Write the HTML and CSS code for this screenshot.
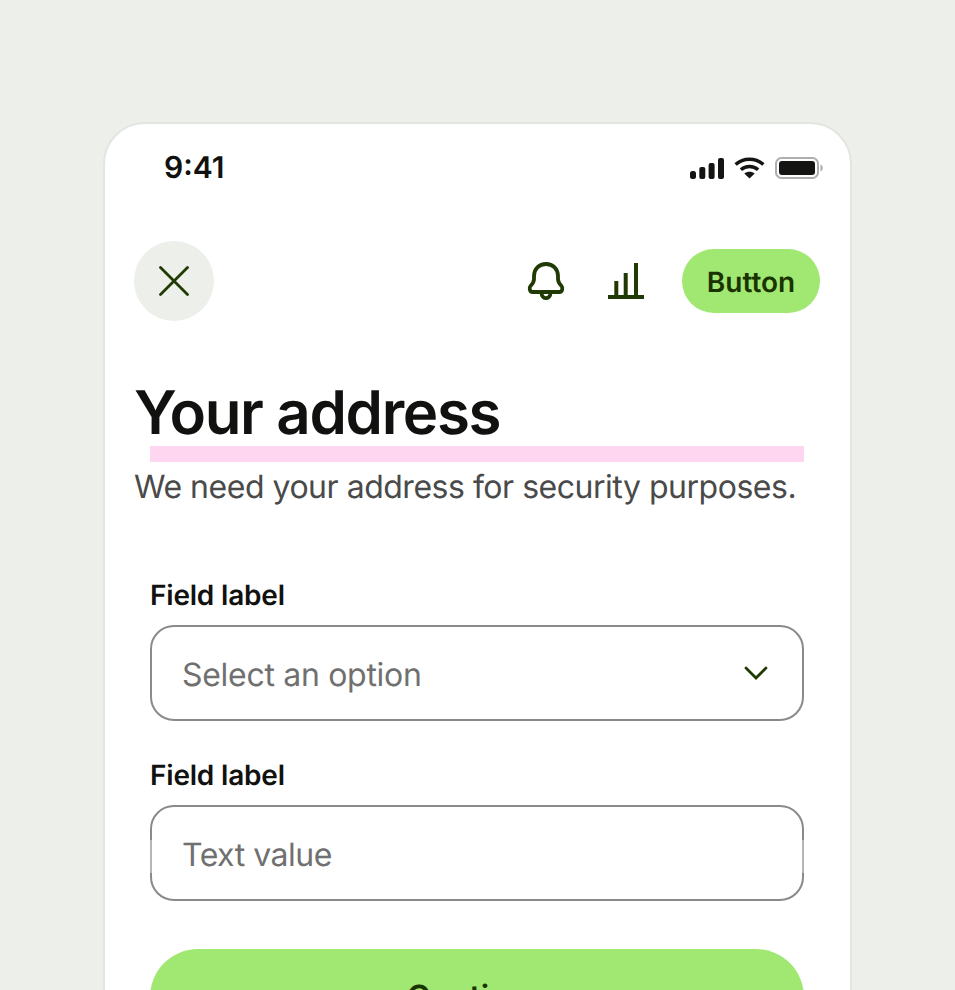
FILE: index.html
```html
<!DOCTYPE html>
<html lang="en">
<head>
    <meta charset="UTF-8">
    <meta name="viewport" content="width=device-width, initial-scale=1.0">
    <title>Your address</title>
    <link rel="stylesheet" href="styles.css">
</head>
<body>
    <div class="phone">
        <div class="status">
            <span class="time">9:41</span>
            <div class="status-icons">
                <svg width="34" height="21" viewBox="0 0 34 21" fill="#141512">
                    <rect x="0" y="13" width="6" height="8" rx="2.5"/>
                    <rect x="9.3" y="9" width="6" height="12" rx="2"/>
                    <rect x="18.6" y="5" width="6" height="16" rx="2"/>
                    <rect x="28" y="0" width="6" height="21" rx="2"/>
                </svg>
                <svg width="31" height="22" viewBox="0 0 31 22" fill="none" stroke="#141512" stroke-width="3.4">
                    <path d="M1.6 7.6C9.4.4 21.600.4 29.400 7.600"/>
                    <path d="M6.900 12.700c4.900-4.300 12.300-4.300 17.200 0"/>
                    <path d="M15.500 21.500l-5.200-5c3-2.500 7.400-2.500 10.400 0z" fill="#141512" stroke="none"/>
                </svg>
                <svg width="48" height="22" viewBox="0 0 48 22">
                    <rect x="1" y="1" width="42" height="20" rx="5.500" fill="none" stroke="#aeaeae" stroke-width="2"/>
                    <rect x="4" y="4" width="36" height="14" rx="3" fill="#141512"/>
                    <path d="M45.500 7.500c1.500.5 2.300 2 2.300 3.500s-.8 3-2.300 3.500z" fill="#aeaeae"/>
                </svg>
            </div>
        </div>

        <div class="toolbar">
            <div class="close">
                <svg width="30" height="30" viewBox="0 0 30 30" fill="none" stroke="#1f3a04" stroke-width="2.800" stroke-linecap="round">
                    <path d="M1.500 1.500l27 27M28.500 1.500l-27 27"/>
                </svg>
            </div>
            <div class="actions">
                <svg class="bell" width="38" height="38" viewBox="0 0 38 38" fill="none" stroke="#1f3a04" stroke-width="3.800" stroke-linejoin="round">
                    <path d="M7 14C7 7 12 2 19 2s12 5 12 12v3c0 3 1.500 5 3.500 7 1.500 1.500 1 6-2 6h-27c-3 0-3.500-4.500-2-6 2-2 3.500-4 3.500-7z"/>
                    <path d="M14.500 30.500c0 7.500 9 7.500 9 0"/>
                </svg>
                <svg class="bars" width="36" height="36" viewBox="0 0 36 36" fill="#1f3a04">
                    <rect x="6.300" y="18" width="4" height="16"/>
                    <rect x="15.700" y="10" width="4" height="24"/>
                    <rect x="26" y="0" width="4" height="34"/>
                    <rect x="0" y="32" width="36" height="4"/>
                </svg>
                <div class="btn-small">Button</div>
            </div>
        </div>

        <h1 class="title">Your address</h1>
        <div class="underline"></div>
        <p class="subtitle">We need your address for security purposes.</p>

        <div class="form">
            <div class="field">
                <label class="label">Field label</label>
                <div class="control">
                    <span>Select an option</span>
                    <svg class="chevron" width="24" height="16" viewBox="0 0 24 16" fill="none" stroke="#1f3a04" stroke-width="2.700" stroke-linecap="round">
                        <path d="M2 3l10 10L22 3"/>
                    </svg>
                </div>
            </div>
            <div class="field">
                <label class="label">Field label</label>
                <div class="control text-input">
                    <span>Text value</span>
                </div>
            </div>
            <div class="btn-main">Continue</div>
        </div>
    </div>
</body>
</html>
```

FILE: styles.css
```css
html, body {
    height: 990px;
}
body {
    margin: 0;
    padding: 0;
    overflow: hidden;
    background-color: #ecefea;
    font-family: Inter, "Liberation Sans", sans-serif;
    color: #111210;
    text-rendering: geometricPrecision;
}
.phone {
    box-sizing: border-box;
    width: 749px;
    height: 1000px;
    margin: 122px 0 0 103px;
    padding: 0 30px;
    background-color: #fff;
    border: 2px solid #e3e5e1;
    border-radius: 42px;
}
.status {
    display: flex;
    justify-content: space-between;
    align-items: center;
    height: 44px;
    margin-top: 22px;
}
.time {
    margin-left: 29px;
    font-size: 30px;
    font-weight: 600;
    line-height: 44px;
}
.status-icons {
    display: flex;
    align-items: center;
    gap: 10px;
    margin-right: -3px;
}
.toolbar {
    display: flex;
    justify-content: space-between;
    align-items: center;
    margin-top: 51px;
    margin-left: -1px;
}
.close {
    display: flex;
    align-items: center;
    justify-content: center;
    width: 80px;
    height: 80px;
    border-radius: 50%;
    background-color: #ecefea;
}
.actions {
    display: flex;
    align-items: center;
}
.bell {
    margin-right: 43px;
}
.bars {
    margin-right: 38px;
}
.btn-small {
    width: 138px;
    height: 64px;
    border-radius: 32px;
    background-color: #a0e872;
    color: #1a3300;
    font-size: 28px;
    font-weight: 600;
    line-height: 66px;
    text-align: center;
}
.title {
    margin: 56px 0 0 -1px;
    font-size: 60px;
    font-weight: 630;
    line-height: 72px;
    letter-spacing: -1.35px;
}
.underline {
    height: 16px;
    margin: -3px 16px 0 15px;
    background-color: #ffd6ef;
}
.subtitle {
    margin: 5px 0 0 -1px;
    color: #4a4a4a;
    font-size: 32px;
    line-height: 40px;
    letter-spacing: -0.48px;
}
.form {
    display: flex;
    flex-direction: column;
    margin: 73px 16px 0 15px;
}
.field {
    display: flex;
    flex-direction: column;
    gap: 15px;
    margin-bottom: 39px;
}
.label {
    font-size: 28px;
    font-weight: 600;
    line-height: 30px;
    letter-spacing: -0.2px;
}
.control {
    position: relative;
    box-sizing: border-box;
    display: flex;
    justify-content: space-between;
    align-items: center;
    height: 96px;
    padding: 3px 34px 0 30px;
    border: 2px solid #8a8a8a;
    border-radius: 24px;
    color: #707070;
    font-size: 32px;
    letter-spacing: -0.3px;
}
.chevron {
    margin-top: -3px;
}
.text-input {
    letter-spacing: -0.5px;
}
.text-input::before,
.text-input::after {
    content: "";
    position: absolute;
    top: 33px;
    width: 2px;
    height: 33px;
    background-color: #b5b5b5;
}
.text-input::before {
    left: -2px;
}
.text-input::after {
    right: -2px;
}
.btn-main {
    height: 96px;
    margin-top: 9px;
    border-radius: 48px;
    background-color: #a0e872;
    color: #1a3300;
    font-size: 32px;
    font-weight: 600;
    line-height: 96px;
    text-align: center;
}
```
